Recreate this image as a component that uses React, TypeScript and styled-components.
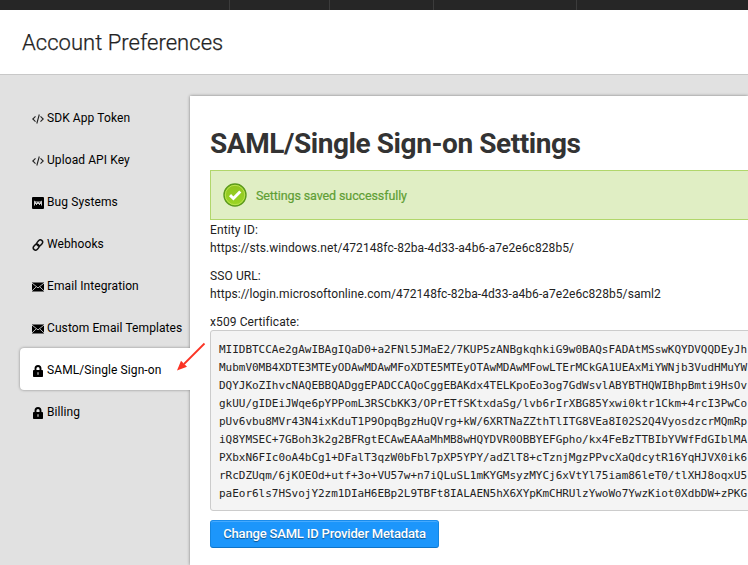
import React from "react";
import styled, { createGlobalStyle } from "styled-components";

const GlobalStyle = createGlobalStyle`
  * { box-sizing: border-box; }
  body { margin: 0; overflow: hidden; background: #e1e1e1; font-family: Roboto, sans-serif; }
`;

const Page = styled.div`
  position: relative;
  display: flex;
  flex-direction: column;
  height: 565px;
  overflow: hidden;
`;

const TopBar = styled.nav`
  display: grid;
  grid-template-columns: 230px 100px 104px 143px 1fr;
  flex: 0 0 10px;
  background: #262626;
`;

const TopCell = styled.div`
  border-right: 1px solid #3c3c3c;
  &:last-child { border-right: 0; }
`;

const Header = styled.header`
  flex: 0 0 65px;
  padding: 18px 22px 0;
  background: #fff;
  border-bottom: 1px solid #c8c8c8;
`;

const PageTitle = styled.h1`
  margin: 0;
  font-size: 22px;
  line-height: 30px;
  font-weight: 300;
  letter-spacing: 0.04px;
  color: #222;
  -webkit-text-stroke: 0.25px #222;
`;

const Body = styled.div`
  display: flex;
  flex: 1;
  min-height: 0;
`;

const Sidebar = styled.aside`
  flex: 0 0 190px;
  padding: 21px 0 0 20px;
`;

const NavItem = styled.a<{ $active?: boolean }>`
  display: flex;
  align-items: center;
  height: 42px;
  padding: 2px 0 0 12px;
  gap: 3px;
  position: relative;
  z-index: ${(p) => (p.$active ? 2 : 0)};
  border-radius: 4px 0 0 4px;
  background: ${(p) => (p.$active ? "#fff" : "transparent")};
  box-shadow: ${(p) => (p.$active ? "0 0 3px rgba(0,0,0,.4)" : "none")};
  clip-path: ${(p) => (p.$active ? "inset(-5px 0 -5px -5px)" : "none")};
  color: #000;
  font-size: 12px;
  letter-spacing: 0.09px;
  white-space: nowrap;
  svg { flex: none; margin-top: 2px; }
`;

const Panel = styled.main`
  flex: 1;
  min-width: 0;
  margin-top: 21px;
  padding: 30px 0 0 20px;
  background: #fff;
  box-shadow: 0 0 3px rgba(0, 0, 0, 0.45);
  position: relative;
  z-index: 1;
  color: #222;
`;

const Heading = styled.h2`
  margin: 0 0 9px;
  font-size: 28px;
  line-height: 35px;
  font-weight: 700;
  letter-spacing: -0.43px;
  color: #333;
  white-space: nowrap;
`;

const Alert = styled.div`
  display: flex;
  align-items: center;
  gap: 9px;
  height: 50px;
  margin-bottom: 1px;
  padding: 0 0 0 12px;
  background: #e0eec4;
  border: 1px solid #b1d66b;
  border-right: 0;
  color: #5f9e35;
  font-size: 12.5px;
  letter-spacing: -0.11px;
  -webkit-text-stroke: 0.2px #5f9e35;
`;

const Field = styled.p`
  margin: 0 0 10px;
  font-size: 12px;
  line-height: 18px;
  letter-spacing: 0.1px;
  white-space: nowrap;
`;

const Value = styled.span`
  display: block;
  letter-spacing: 0.07px;
`;

const Certificate = styled.pre`
  height: 181px;
  margin: -11px -10px 9px 0;
  padding: 10px 0 0 8px;
  overflow: hidden;
  border: 1px solid #ccc;
  border-radius: 3px;
  background: #f4f4f4;
  color: #222;
  font: 11px/18px "DejaVu Sans Mono", monospace;
  letter-spacing: -0.022px;
`;

const Button = styled.button`
  display: block;
  width: 229px;
  height: 28px;
  padding: 0 0 2px;
  border: 1px solid #1485e0;
  border-top-color: #1a8cec;
  border-bottom-color: #0f74c8;
  border-radius: 3px;
  background: #1c96fb;
  box-shadow: inset 0 1px 0 #45aaff;
  color: #fff;
  font: 500 13px Roboto, sans-serif;
  letter-spacing: -0.18px;
  text-shadow: 0 1px 1px rgba(0, 0, 0, 0.45);
  white-space: nowrap;
`;

const Pointer = styled.svg`
  position: absolute;
  left: 174px;
  top: 340px;
  z-index: 3;
`;

const CodeIcon = () => (
  <svg width="12" height="12" viewBox="0 0 12 12" fill="none" stroke="#222" strokeWidth="1.1">
    <path d="M3.5 3.4 L.8 6 L3.5 8.6 M8.5 3.4 L11.2 6 L8.5 8.6 M7.3 1.5 L4.8 10.5" />
  </svg>
);

const BugIcon = () => (
  <svg width="12" height="12" viewBox="0 0 12 12">
    <rect width="12" height="12" rx="1" fill="#000" />
    <path
      d="M2 8.6 V4.4 L2.6 3.6 L3.6 4.4 H8.4 L9.4 3.6 L10 4.4 V8.6 H9 V7 H8 V8 H7 V7 H5 V8 H4 V7 H3 V8.6 Z"
      fill="#c9c9c9"
    />
    <path d="M4 5.2 H5 V6 H4 Z M7 5.2 H8 V6 H7 Z" fill="#333" />
  </svg>
);

const LinkIcon = () => (
  <svg width="12" height="12" viewBox="0 0 12 12" fill="none" stroke="#111" strokeWidth="1.5">
    <rect x="-3.2" y="-2.3" width="6.4" height="4.6" rx="2.3" transform="translate(7.7 3.9) rotate(-50)" />
    <rect x="-3.2" y="-2.3" width="6.4" height="4.6" rx="2.3" transform="translate(4.2 8.1) rotate(-50)" />
  </svg>
);

const MailIcon = () => (
  <svg width="12" height="10" viewBox="0 0 12 10">
    <rect y=".5" width="12" height="9" fill="#000" />
    <path
      d="M0 1.1 L6 5.9 L12 1.1 M0 8.9 L4.2 4.9 M12 8.9 L7.8 4.9"
      fill="none"
      stroke="#e1e1e1"
      strokeWidth=".8"
    />
  </svg>
);

const LockIcon = () => (
  <svg width="12" height="12" viewBox="0 0 12 12">
    <path d="M3.5 6 V3.6 A2.5 2.6 0 0 1 8.5 3.6 V6" fill="none" stroke="#000" strokeWidth="1.9" />
    <rect x="1" y="5" width="10" height="7" rx=".8" />
    <path d="M6 7.3 V9.7" stroke="#ddd" strokeWidth="1.1" />
  </svg>
);

const CheckIcon = () => (
  <svg width="24" height="24" viewBox="0 0 24 24">
    <defs>
      <linearGradient id="disc" x1="0" y1="0" x2="0" y2="1">
        <stop offset="0" stopColor="#8fc31f" />
        <stop offset="1" stopColor="#9bd624" />
      </linearGradient>
    </defs>
    <circle cx="12" cy="12" r="11" fill="url(#disc)" stroke="#5c9a1c" strokeWidth="1.4" />
    <circle cx="12" cy="12" r="9.7" fill="none" stroke="#b9e34f" strokeWidth="1" />
    <path d="M7 12.2 L10.4 15.5 L17.3 8.5" fill="none" stroke="#fff" strokeWidth="3" />
  </svg>
);

const items = [
  { label: "SDK App Token", Icon: CodeIcon },
  { label: "Upload API Key", Icon: CodeIcon },
  { label: "Bug Systems", Icon: BugIcon },
  { label: "Webhooks", Icon: LinkIcon },
  { label: "Email Integration", Icon: MailIcon },
  { label: "Custom Email Templates", Icon: MailIcon },
  { label: "SAML/Single Sign-on", Icon: LockIcon, active: true },
  { label: "Billing", Icon: LockIcon },
];

const certificate = [
  "MIIDBTCCAe2gAwIBAgIQaD0+a2FNl5JMaE2/7KUP5zANBgkqhkiG9w0BAQsFADAtMSswKQYDVQQDEyJh",
  "MubmV0MB4XDTE3MTEyODAwMDAwMFoXDTE5MTEyOTAwMDAwMFowLTErMCkGA1UEAxMiYWNjb3VudHMuYW",
  "DQYJKoZIhvcNAQEBBQADggEPADCCAQoCggEBAKdx4TELKpoEo3og7GdWsvlABYBTHQWIBhpBmti9HsOv",
  "gkUU/gIDEiJWqe6pYPPomL3RSCbKK3/OPrETfSKtxdaSg/lvb6rIrXBG85Yxwi0ktr1Ckm+4rcI3PwCo",
  "pUv6vbu8MVr43N4ixKduT1P9OpqBgzHuQVrg+kW/6XRTNaZZthTlITG8VEa8I02S2Q4VyosdzcrMQmRp",
  "iQ8YMSEC+7GBoh3k2g2BFRgtECAwEAAaMhMB8wHQYDVR0OBBYEFGpho/kx4FeBzTTBIbYVWfFdGIblMA",
  "PXbxN6FIc0oA4bCg1+DFalT3qzW0bFbl7pXP5YPY/adZlT8+cTznjMgzPPvcXaQdcytR16YqHJVX0ik6",
  "rRcDZUqm/6jKOEOd+utf+3o+VU57w+n7iQLuSL1mKYGMsyzMYCj6xVtYl75iam86leT0/tlXHJ8oqxU5",
  "paEor6ls7HSvojY2zm1DIaH6EBp2L9TBFt8IALAEN5hX6XYpKmCHRUlzYwoWo7YwzKiot0XdbDW+zPKG",
].join("\n");

export default function App() {
  return (
    <Page>
      <GlobalStyle />
      <TopBar>
        <TopCell />
        <TopCell />
        <TopCell />
        <TopCell />
        <TopCell />
      </TopBar>
      <Header>
        <PageTitle>Account Preferences</PageTitle>
      </Header>
      <Body>
        <Sidebar>
          {items.map(({ label, Icon, active }) => (
            <NavItem key={label} $active={active}>
              <Icon />
              {label}
            </NavItem>
          ))}
        </Sidebar>
        <Panel>
          <Heading>SAML/Single Sign-on Settings</Heading>
          <Alert>
            <CheckIcon />
            Settings saved successfully
          </Alert>
          <Field>
            Entity ID:
            <Value>https://sts.windows.net/472148fc-82ba-4d33-a4b6-a7e2e6c828b5/</Value>
          </Field>
          <Field>
            SSO URL:
            <Value>https://login.microsoftonline.com/472148fc-82ba-4d33-a4b6-a7e2e6c828b5/saml2</Value>
          </Field>
          <Field>x509 Certificate:</Field>
          <Certificate>{certificate}</Certificate>
          <Button>Change SAML ID Provider Metadata</Button>
        </Panel>
      </Body>
      <Pointer width="34" height="34" viewBox="0 0 34 34">
        <path d="M30.5 3.5 L10 24" stroke="#fb3324" strokeWidth="1.8" />
        <path d="M3 30.5 L7 20.8 L13 26.8 Z" fill="#fb3324" />
      </Pointer>
    </Page>
  );
}
